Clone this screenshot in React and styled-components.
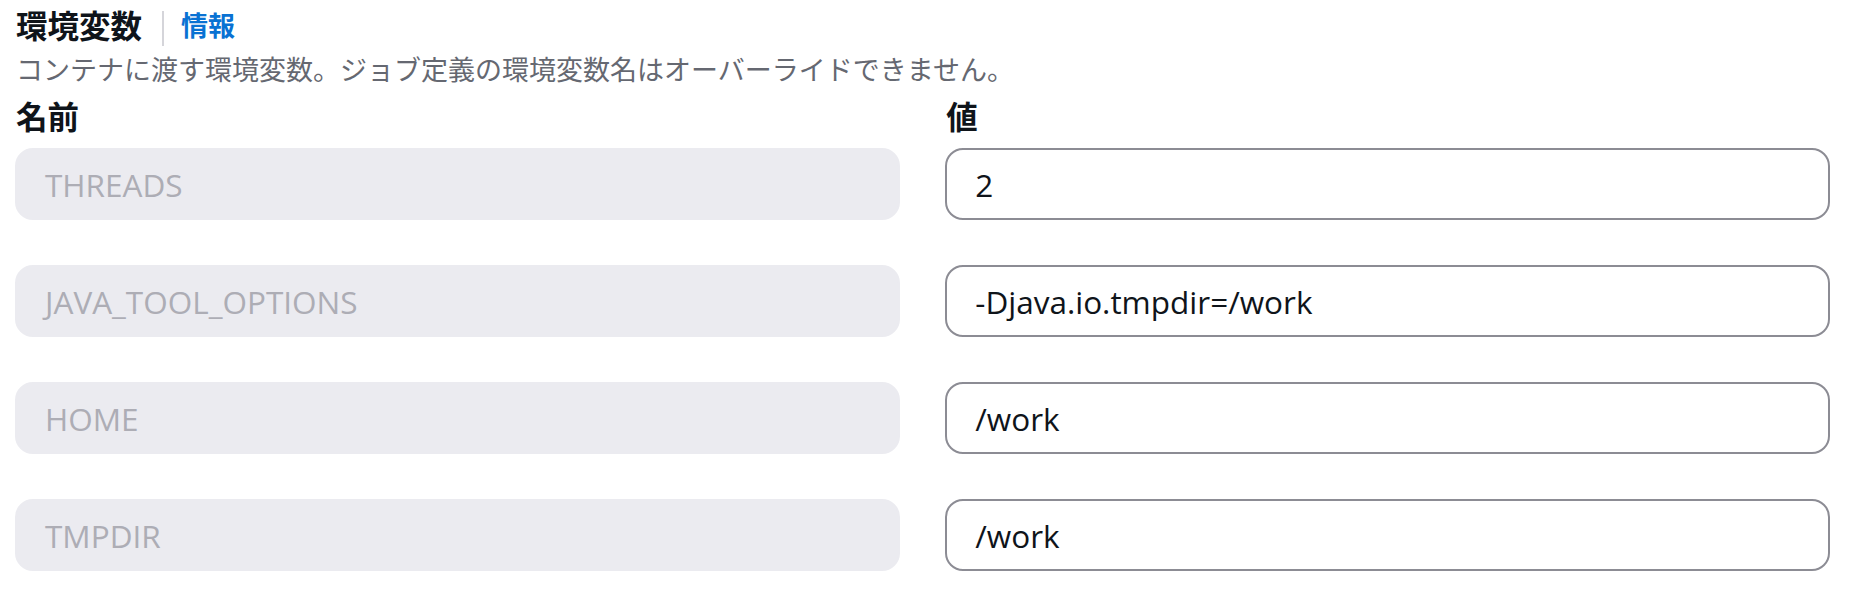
import React from "react";
import styled, { createGlobalStyle } from "styled-components";

const Global = createGlobalStyle`
  html, body { margin: 0; padding: 0; background: #ffffff; }
  body {
    font-family: "Open Sans", "Noto Sans CJK JP", sans-serif;
    color: #0f141a;
    -webkit-font-smoothing: antialiased;
  }
`;

const Page = styled.div`
  width: 1873px;
  box-sizing: border-box;
  padding: 0 43px 0 15px;
`;

const HeaderRow = styled.div`
  display: flex;
  align-items: center;
  height: 52px;
`;

const Title = styled.span`
  font-size: 31.5px;
  font-weight: 700;
  line-height: 52px;
  color: #0f141a;
  padding-left: 1px;
`;

const Divider = styled.span`
  width: 2px;
  height: 35px;
  background: #d5d5da;
  margin: 0 17px 0 20px;
  align-self: center;
  transform: translateY(2px);
`;

const InfoLink = styled.a`
  font-size: 27px;
  font-weight: 700;
  color: #0972d3;
  text-decoration: none;
  line-height: 52px;
`;

const Description = styled.div`
  font-size: 27px;
  line-height: 36px;
  color: #656871;
  padding-left: 1px;
`;

const Grid = styled.div`
  display: grid;
  grid-template-columns: 1fr 1fr;
  column-gap: 45.5px;
  row-gap: 45px;
  margin-top: 4px;
`;

const Label = styled.div`
  font-size: 31.5px;
  font-weight: 700;
  line-height: 49px;
  color: #0f141a;
  margin-bottom: -38px;
  padding-left: 1px;
`;

const Field = styled.div`
  box-sizing: border-box;
  height: 72px;
  border-radius: 18px;
  display: flex;
  align-items: center;
  padding: 0 28px;
  font-size: 31.5px;
  white-space: nowrap;
  background: ${(p) => (p.$disabled ? "#ebebf0" : "#ffffff")};
  border: 2px solid ${(p) => (p.$disabled ? "#ebebf0" : "#8c8c94")};
  color: ${(p) => (p.$disabled ? "#adadb5" : "#0f141a")};
`;

const rows = [
  ["THREADS", "2"],
  ["JAVA_TOOL_OPTIONS", "-Djava.io.tmpdir=/work"],
  ["HOME", "/work"],
  ["TMPDIR", "/work"],
];

export default function App() {
  return (
    <Page>
      <Global />
      <HeaderRow>
        <Title>環境変数</Title>
        <Divider />
        <InfoLink href="#">情報</InfoLink>
      </HeaderRow>
      <Description>
        コンテナに渡す環境変数。ジョブ定義の環境変数名はオーバーライドできません。
      </Description>
      <Grid>
        <Label>名前</Label>
        <Label>値</Label>
        {rows.map(([k, v]) => (
          <React.Fragment key={k}>
            <Field $disabled>{k}</Field>
            <Field>{v}</Field>
          </React.Fragment>
        ))}
      </Grid>
    </Page>
  );
}
